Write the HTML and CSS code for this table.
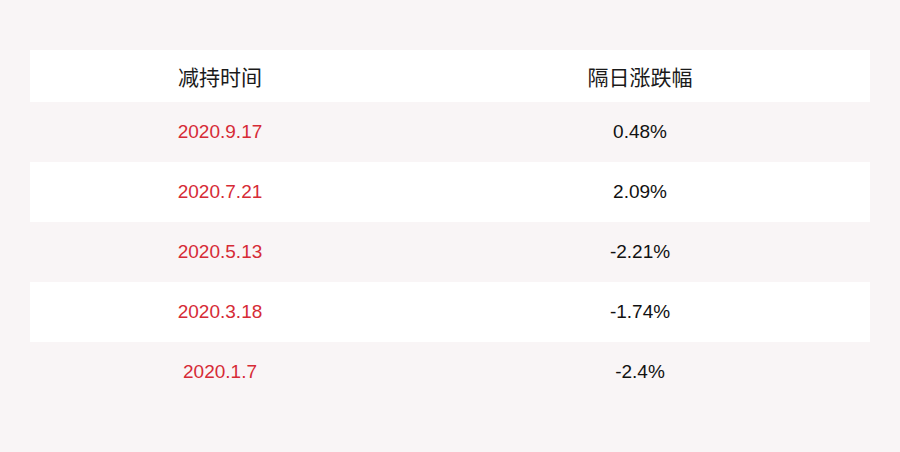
FILE: index.html
```html
<!DOCTYPE html>
<html lang="zh">
<head>
<meta charset="utf-8">
<link rel="stylesheet" href="styles.css">
</head>
<body>
<div class="table">
  <div class="row head"><div class="c1">减持时间</div><div class="c2">隔日涨跌幅</div></div>
  <div class="row"><div class="c1 red">2020.9.17</div><div class="c2">0.48%</div></div>
  <div class="row alt"><div class="c1 red">2020.7.21</div><div class="c2">2.09%</div></div>
  <div class="row"><div class="c1 red">2020.5.13</div><div class="c2">-2.21%</div></div>
  <div class="row alt"><div class="c1 red">2020.3.18</div><div class="c2">-1.74%</div></div>
  <div class="row"><div class="c1 red">2020.1.7</div><div class="c2">-2.4%</div></div>
</div>
</body>
</html>
```
FILE: styles.css
```css
html, body { margin: 0; padding: 0; }
body {
  width: 900px;
  height: 452px;
  background: #f9f5f6;
  font-family: "Liberation Sans", Arial, "Noto Sans CJK SC", sans-serif;
  padding-top: 50px;
  box-sizing: border-box;
}
.table { margin: 0 30px; }
.row {
  display: flex;
  height: 60px;
  align-items: center;
  font-size: 19px;
  color: #111;
}
.row.head { height: 52px; background: #fff; font-size: 21px; color: #1a1a1a; }
.row.alt { background: #fff; }
.c1 { width: 380px; text-align: center; }
.c2 { width: 460px; text-align: center; }
.red { color: #d62b36; }
```
